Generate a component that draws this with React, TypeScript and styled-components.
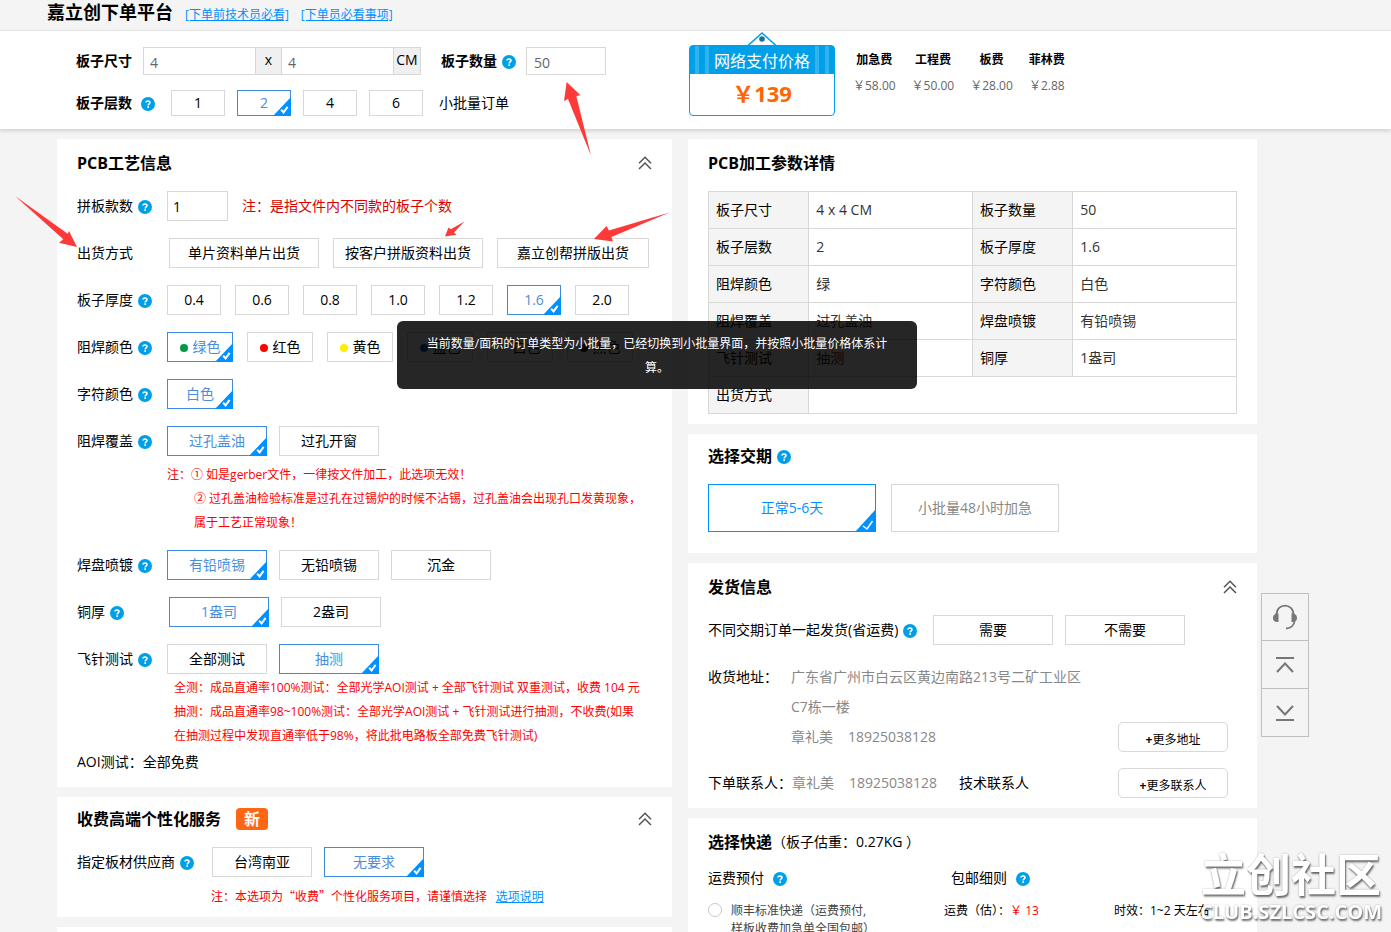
import React from "react";
import styled, { createGlobalStyle, css } from "styled-components";

const GlobalStyle = createGlobalStyle`
  * { box-sizing: border-box; }
  body {
    margin: 0;
    background: #f4f4f4;
    color: #000;
    font-family: "Open Sans", "Noto Sans CJK SC", sans-serif;
    font-size: 14px;
    line-height: 24px;
  }
  button, input { font: inherit; color: inherit; }
  button { cursor: pointer; }
`;

const BLUE = "#0090ff";
const LINE = "#d8d8d8";

const Page = styled.div`
  position: relative;
  height: 100vh;
  overflow-x: hidden;
  overflow-y: auto;
  scrollbar-width: none;
`;

const Header = styled.header`
  display: flex;
  align-items: baseline;
  gap: 12px;
  height: 30px;
  padding: 0 47px;
`;

const SiteTitle = styled.h1`
  margin: 0;
  font-size: 18px;
  line-height: 24px;
`;

const TextLink = styled.a`
  color: ${BLUE};
  font-size: 12px;
  text-decoration: underline;
`;

const OrderBar = styled.section`
  display: flex;
  align-items: flex-start;
  height: 99px;
  padding-left: 76px;
  background: #fff;
  border-top: 1px solid #e4e4e4;
  box-shadow: 0 2px 4px rgba(0, 0, 0, 0.15);
`;

const OrderForm = styled.div`
  flex: 0 0 613px;
  padding-top: 16px;
`;

const FormLine = styled.div`
  display: flex;
  align-items: center;
  height: 28px;
  margin-bottom: 14px;
`;

const BoldLabel = styled.label`
  font-weight: bold;
`;

const SizeGroup = styled.div`
  display: flex;
  width: 278px;
  height: 28px;
  margin: 0 20px 0 11px;
  border: 1px solid ${LINE};
`;

const SizeInput = styled.input`
  flex: 1;
  min-width: 0;
  padding: 3px 6px 0;
  border: 0;
  background: #fff;
  color: #666;
`;

const Unit = styled.span`
  flex: none;
  padding: 0 1px;
  min-width: 27px;
  background: #f0f0f0;
  border: solid ${LINE};
  border-width: 0 1px;
  text-align: center;

  &:last-child { border-right: 0; }
`;

const CountInput = styled.input`
  width: 80px;
  height: 28px;
  margin-left: 10px;
  padding: 3px 7px 0;
  border: 1px solid ${LINE};
  color: #666;
`;

const HelpButton = styled.button`
  flex: none;
  width: 14px;
  height: 14px;
  margin: 2px 0 0 5px;
  padding: 0;
  border: 0;
  background: none;

  svg { display: block; }
`;

const Options = styled.div<{ $gap?: number; $start?: number }>`
  display: flex;
  gap: ${(p) => p.$gap ?? 12}px;
  margin-left: ${(p) => p.$start ?? 0}px;
`;

const OptionButton = styled.button<{ $w: number; $h?: number; $on?: boolean; $soft?: boolean }>`
  position: relative;
  flex: none;
  display: flex;
  align-items: center;
  justify-content: center;
  width: ${(p) => p.$w}px;
  height: ${(p) => p.$h ?? 30}px;
  padding: 0;
  background: #fff;
  border: 1px solid ${LINE};
  ${(p) => p.$soft && css`color: #888;`}
  ${(p) =>
    p.$on &&
    css`
      border-color: ${p.$soft ? BLUE : "#3d8be0"};
      color: ${p.$soft ? BLUE : "#4a8ee0"};
    `}
`;

const Corner = styled.svg`
  position: absolute;
  right: -1px;
  bottom: -1px;
`;

const Dot = styled.i<{ $c: string }>`
  width: 8px;
  height: 8px;
  margin: 2px 5px 0 0;
  border-radius: 50%;
  background: ${(p) => p.$c};
`;

const BatchNote = styled.span`
  margin-left: 16px;
`;

const PriceTag = styled.div`
  position: relative;
  flex: 0 0 146px;
  height: 71px;
  margin-top: 14px;
  border: 1px solid #00a0e9;
  border-radius: 4px;
  text-align: center;
`;

const Hook = styled.svg`
  position: absolute;
  left: 56px;
  top: -15px;
`;

const PriceHead = styled.div`
  height: 28px;
  color: #fff;
  font-size: 16px;
  line-height: 31px;
  background: linear-gradient(
    90deg,
    #00a0e9 5px, #2fb2ee 5px 9px, #00a0e9 9px 15px, #2fb2ee 15px 19px, #00a0e9 19px 125px,
    #2fb2ee 125px 129px, #00a0e9 129px 135px, #2fb2ee 135px 139px, #00a0e9 139px
  );
`;

const PriceValue = styled.strong`
  display: block;
  color: #ff6600;
  font-size: 22px;
  line-height: 38px;
`;

const FeeList = styled.dl`
  display: flex;
  gap: 16px;
  margin: 16px 0 0 18px;
  font-size: 12px;
  line-height: 26px;
  text-align: center;
`;

const FeeName = styled.dt`
  font-weight: bold;
`;

const FeeValue = styled.dd`
  margin: 0;
  color: #666;
  white-space: nowrap;
`;

const Main = styled.main`
  display: grid;
  grid-template-columns: 615fr 569fr;
  align-items: start;
  gap: 16px;
  padding: 10px 134px 10px 57px;
`;

const Column = styled.div`
  display: grid;
  gap: 10px;
  min-width: 0;
`;

const Card = styled.section<{ $tight?: boolean; $bottom?: number }>`
  padding: ${(p) => (p.$tight ? 10 : 12)}px 20px ${(p) => p.$bottom ?? 10}px;
  background: #fff;
`;

const CardHead = styled.div`
  display: flex;
  align-items: center;
  height: 24px;
  margin-bottom: 16px;
`;

const CardTitle = styled.h2`
  margin: 0;
  font-size: 16px;
`;

const FoldButton = styled.button`
  width: 14px;
  height: 14px;
  margin-left: auto;
  padding: 0;
  border: 0;
  background: none;

  svg { display: block; }
`;

const NewBadge = styled.span`
  width: 32px;
  height: 22px;
  margin-left: 15px;
  border-radius: 4px;
  background: #ff6614;
  color: #fff;
  font-size: 16px;
  font-weight: bold;
  line-height: 22px;
  text-align: center;
`;

const Row = styled.div<{ $last?: boolean }>`
  display: flex;
  align-items: center;
  min-height: 30px;
  margin-bottom: ${(p) => (p.$last ? 0 : 17)}px;
`;

const RowLabel = styled.div<{ $w?: number }>`
  display: flex;
  align-items: center;
  flex: 0 0 ${(p) => p.$w ?? 90}px;
`;

const PanelInput = styled.input`
  width: 61px;
  height: 30px;
  padding: 0 5px;
  border: 1px solid ${LINE};
`;

const InlineNote = styled.span`
  margin-left: 14px;
  color: #d90000;
`;

const Notes = styled.div<{ $left: number; $top: number; $bottom: number }>`
  margin: ${(p) => p.$top}px 0 ${(p) => p.$bottom}px ${(p) => p.$left}px;
  color: #f00;
  font-size: 12px;
  white-space: nowrap;
`;

const NoteLine = styled.p<{ $indent?: boolean; $wideQuotes?: boolean }>`
  margin: 0;
  padding-left: ${(p) => (p.$indent ? 27 : 0)}px;
  ${(p) => p.$wideQuotes && css`font-family: "Noto Sans CJK SC", sans-serif;`}

  a { margin-left: 6px; }
`;

const PlainLine = styled.p`
  margin: 0;
  line-height: 28px;
`;

const SpecTable = styled.table`
  width: 100%;
  table-layout: fixed;
  border-collapse: collapse;

  th, td {
    height: 37px;
    padding: 0 7px;
    border: 1px solid ${LINE};
    font-weight: normal;
    text-align: left;
  }
  th { width: 19%; background: #f4f4f4; }
  td { color: #333; }
`;

const Address = styled.address`
  flex: 1;
  color: #888;
  font-style: normal;
  line-height: 30px;
`;

const Person = styled.span`
  color: #888;
  margin-right: 15px;
`;

const AddressRow = styled.div`
  display: flex;
  align-items: flex-end;
  padding-right: 9px;
  line-height: 30px;

  & + & { margin-top: 16px; }
`;

const AddressLabel = styled.span`
  flex: 0 0 83px;
  align-self: flex-start;
  white-space: nowrap;
`;

const MoreButton = styled.button`
  flex: none;
  width: 110px;
  height: 30px;
  margin-left: auto;
  padding: 2px 0 0;
  background: #fff;
  border: 1px solid ${LINE};
  border-radius: 5px;
  font-size: 12px;
`;

const Phone = styled.span`
  margin-right: 22px;
  color: #888;
`;

const ExpressGrid = styled.div`
  display: grid;
  grid-template-columns: 236fr 170fr 123fr;
  font-size: 12px;
  line-height: 18px;
  white-space: nowrap;
`;

const ExpressHead = styled.div`
  display: grid;
  grid-template-columns: 243fr 286fr;
  margin: -4px 0 12px;
`;

const HelpTitle = styled.div`
  display: flex;
  align-items: center;

  button { margin-left: 9px; }
`;

const RadioLabel = styled.label`
  display: flex;
  align-items: flex-start;
  gap: 9px;
  color: #444;
`;

const Radio = styled.input`
  appearance: none;
  flex: none;
  width: 14px;
  height: 14px;
  margin: 1px 0 0;
  border: 1px solid #c8c8c8;
  border-radius: 50%;
  background: #fff;
`;

const Red = styled.span`
  color: #f00;
`;

const SideRail = styled.nav`
  position: fixed;
  right: 82px;
  top: 593px;
  width: 48px;
  border: 1px solid #bfbfbf;
  background: #f4f4f4;
`;

const RailButton = styled.button`
  display: flex;
  align-items: center;
  justify-content: center;
  width: 100%;
  height: 48px;
  padding: 0;
  border: 0;
  background: none;

  & + & { border-top: 1px solid #bfbfbf; }
  &:first-child { height: 46px; }
`;

const Toast = styled.div`
  position: absolute;
  left: 397px;
  top: 321px;
  width: 520px;
  padding: 11px 24px 9px;
  border-radius: 6px;
  background: rgba(0, 0, 0, 0.85);
  color: #fff;
  font-size: 12px;
  text-align: center;
`;

const Arrows = styled.svg`
  position: absolute;
  left: 0;
  top: 0;
  pointer-events: none;
`;

const Watermark = styled.div`
  position: fixed;
  right: 9px;
  bottom: 8px;
  color: #fff;
  font-weight: bold;
  text-align: center;
  text-shadow: 1px 2px 2px rgba(0, 0, 0, 0.55), 0 0 2px rgba(0, 0, 0, 0.3);
  pointer-events: none;
`;

const WatermarkName = styled.div`
  font-size: 45px;
  line-height: 50px;
`;

const WatermarkSite = styled.div`
  font-size: 20px;
  line-height: 24px;
`;

function Help({ about }: { about: string }) {
  return (
    <HelpButton type="button" aria-label={about}>
      <svg width="14" height="14" viewBox="0 0 14 14">
        <circle cx="7" cy="7" r="7" fill="#00a0e9" />
        <path d="M5 5.6C5 3.4 9 3.4 9 5.5C9 6.8 7.2 6.8 7.2 8.4" fill="none" stroke="#fff" strokeWidth="1.6" />
        <rect x="6.3" y="9.3" width="1.7" height="1.6" fill="#fff" />
      </svg>
    </HelpButton>
  );
}

function Fold() {
  return (
    <FoldButton type="button" aria-label="收起">
      <svg width="14" height="14" viewBox="0 0 14 14" fill="none" stroke="#555" strokeWidth="1.5">
        <path d="M1 7.2L7 1.2L13 7.2M1 13L7 7L13 13" />
      </svg>
    </FoldButton>
  );
}

type OptionProps = {
  text: string;
  w: number;
  h?: number;
  on?: boolean;
  dot?: string;
  soft?: boolean;
};

function Option({ text, w, h, on, dot, soft }: OptionProps) {
  return (
    <OptionButton type="button" $w={w} $h={h} $on={on} $soft={soft} aria-pressed={!!on}>
      {dot && <Dot $c={dot} />}
      {text}
      {on && !soft && (
        <Corner width="18" height="19" viewBox="0 0 18 19">
          <path d="M18 0V19H0Z" fill={BLUE} />
          <path d="M8.2 12.8L10.6 15.4L14.6 9.8" fill="none" stroke="#fff" strokeWidth="2" />
        </Corner>
      )}
      {on && soft && (
        <Corner width="21" height="23" viewBox="0 0 21 23">
          <path d="M21 0V23H0Z" fill={BLUE} />
          <path d="M8 17L12 20L17.5 12" fill="none" stroke="#fff" strokeWidth="1.5" />
        </Corner>
      )}
    </OptionButton>
  );
}

const fees = [
  ["加急费", "￥58.00"],
  ["工程费", "￥50.00"],
  ["板费", "￥28.00"],
  ["菲林费", "￥2.88"],
];

const specs = [
  ["板子尺寸", "4 x 4 CM", "板子数量", "50"],
  ["板子层数", "2", "板子厚度", "1.6"],
  ["阻焊颜色", "绿", "字符颜色", "白色"],
  ["阻焊覆盖", "过孔盖油", "焊盘喷镀", "有铅喷锡"],
  ["飞针测试", "抽测", "铜厚", "1盎司"],
];

const maskColours = [
  ["绿色", "#009944"],
  ["红色", "#ff0000"],
  ["黄色", "#ffee00"],
  ["蓝色", "#0068b7"],
  ["白色", "#eeeeee"],
  ["黑色", "#000000"],
];

export default function App() {
  return (
    <Page>
      <GlobalStyle />
      <Header>
        <SiteTitle>嘉立创下单平台</SiteTitle>
        <TextLink href="#tech">[下单前技术员必看]</TextLink>
        <TextLink href="#order">[下单员必看事项]</TextLink>
      </Header>

      <OrderBar>
        <OrderForm>
          <FormLine>
            <BoldLabel htmlFor="len">板子尺寸</BoldLabel>
            <SizeGroup>
              <SizeInput id="len" defaultValue="4" />
              <Unit>x</Unit>
              <SizeInput aria-label="板子宽度" defaultValue="4" />
              <Unit>CM</Unit>
            </SizeGroup>
            <BoldLabel htmlFor="count">板子数量</BoldLabel>
            <Help about="板子数量说明" />
            <CountInput id="count" defaultValue="50" />
          </FormLine>
          <FormLine>
            <BoldLabel as="span">板子层数</BoldLabel>
            <HelpTitle>
              <Help about="板子层数说明" />
            </HelpTitle>
            <Options $start={16}>
              {["1", "2", "4", "6"].map((n) => (
                <Option key={n} text={n} w={54} h={26} on={n === "2"} />
              ))}
            </Options>
            <BatchNote>小批量订单</BatchNote>
          </FormLine>
        </OrderForm>
        <PriceTag>
          <Hook width="32" height="15" viewBox="0 0 32 15">
            <path d="M2 14.5L16 2L30 14.5" fill="none" stroke="#00a0e9" strokeWidth="1.6" />
            <circle cx="16" cy="8" r="2.8" fill="#1b6f9c" />
          </Hook>
          <PriceHead>网络支付价格</PriceHead>
          <PriceValue>￥139</PriceValue>
        </PriceTag>
        <FeeList>
          {fees.map(([name, value]) => (
            <div key={name}>
              <FeeName>{name}</FeeName>
              <FeeValue>{value}</FeeValue>
            </div>
          ))}
        </FeeList>
      </OrderBar>

      <Main>
        <Column>
          <Card $bottom={11}>
            <CardHead>
              <CardTitle>PCB工艺信息</CardTitle>
              <Fold />
            </CardHead>
            <Row>
              <RowLabel>
                <label htmlFor="kinds">拼板款数</label>
                <Help about="拼板款数说明" />
              </RowLabel>
              <PanelInput id="kinds" defaultValue="1" />
              <InlineNote>注：是指文件内不同款的板子个数</InlineNote>
            </Row>
            <Row>
              <RowLabel>出货方式</RowLabel>
              <Options $gap={14} $start={2}>
                <Option text="单片资料单片出货" w={150} />
                <Option text="按客户拼版资料出货" w={150} />
                <Option text="嘉立创帮拼版出货" w={152} />
              </Options>
            </Row>
            <Row>
              <RowLabel>
                板子厚度
                <Help about="板子厚度说明" />
              </RowLabel>
              <Options $gap={14}>
                {["0.4", "0.6", "0.8", "1.0", "1.2", "1.6", "2.0"].map((t) => (
                  <Option key={t} text={t} w={54} on={t === "1.6"} />
                ))}
              </Options>
            </Row>
            <Row>
              <RowLabel>
                阻焊颜色
                <Help about="阻焊颜色说明" />
              </RowLabel>
              <Options $gap={14}>
                {maskColours.map(([name, c]) => (
                  <Option key={name} text={name} dot={c} w={66} on={name === "绿色"} />
                ))}
              </Options>
            </Row>
            <Row>
              <RowLabel>
                字符颜色
                <Help about="字符颜色说明" />
              </RowLabel>
              <Options>
                <Option text="白色" w={66} on />
              </Options>
            </Row>
            <Row $last>
              <RowLabel>
                阻焊覆盖
                <Help about="阻焊覆盖说明" />
              </RowLabel>
              <Options>
                <Option text="过孔盖油" w={100} on />
                <Option text="过孔开窗" w={100} />
              </Options>
            </Row>
            <Notes $left={90} $top={7} $bottom={15}>
              <NoteLine>注：① 如是gerber文件，一律按文件加工，此选项无效！</NoteLine>
              <NoteLine $indent>② 过孔盖油检验标准是过孔在过锡炉的时候不沾锡，过孔盖油会出现孔口发黄现象，</NoteLine>
              <NoteLine $indent>属于工艺正常现象！</NoteLine>
            </Notes>
            <Row>
              <RowLabel>
                焊盘喷镀
                <Help about="焊盘喷镀说明" />
              </RowLabel>
              <Options>
                <Option text="有铅喷锡" w={100} on />
                <Option text="无铅喷锡" w={100} />
                <Option text="沉金" w={100} />
              </Options>
            </Row>
            <Row>
              <RowLabel>
                铜厚
                <Help about="铜厚说明" />
              </RowLabel>
              <Options $start={2}>
                <Option text="1盎司" w={100} on />
                <Option text="2盎司" w={100} />
              </Options>
            </Row>
            <Row $last>
              <RowLabel>
                飞针测试
                <Help about="飞针测试说明" />
              </RowLabel>
              <Options>
                <Option text="全部测试" w={100} />
                <Option text="抽测" w={100} on />
              </Options>
            </Row>
            <Notes $left={97} $top={2} $bottom={0}>
              <NoteLine>全测：成品直通率100%测试：全部光学AOI测试 + 全部飞针测试 双重测试，收费 104 元</NoteLine>
              <NoteLine>抽测：成品直通率98~100%测试：全部光学AOI测试 + 飞针测试进行抽测，不收费(如果</NoteLine>
              <NoteLine>在抽测过程中发现直通率低于98%，将此批电路板全部免费飞针测试)</NoteLine>
            </Notes>
            <PlainLine>AOI测试：全部免费</PlainLine>
          </Card>

          <Card $tight $bottom={9}>
            <CardHead>
              <CardTitle>收费高端个性化服务</CardTitle>
              <NewBadge>新</NewBadge>
              <Fold />
            </CardHead>
            <Row $last>
              <RowLabel $w={135}>
                指定板材供应商
                <Help about="板材供应商说明" />
              </RowLabel>
              <Options>
                <Option text="台湾南亚" w={100} />
                <Option text="无要求" w={100} on />
              </Options>
            </Row>
            <Notes $left={134} $top={7} $bottom={0}>
              <NoteLine $wideQuotes>
                注：本选项为“收费”个性化服务项目，请谨慎选择 <TextLink href="#supplier">选项说明</TextLink>
              </NoteLine>
            </Notes>
          </Card>

          <Card>
            <CardHead />
          </Card>
        </Column>

        <Column>
          <Card>
            <CardHead>
              <CardTitle>PCB加工参数详情</CardTitle>
            </CardHead>
            <SpecTable>
              <tbody>
                {specs.map(([a, b, c, d]) => (
                  <tr key={a}>
                    <th scope="row">{a}</th>
                    <td>{b}</td>
                    <th scope="row">{c}</th>
                    <td>{d}</td>
                  </tr>
                ))}
                <tr>
                  <th scope="row">出货方式</th>
                  <td colSpan={3} />
                </tr>
              </tbody>
            </SpecTable>
          </Card>

          <Card $tight $bottom={21}>
            <CardHead>
              <CardTitle>选择交期</CardTitle>
              <Help about="交期说明" />
            </CardHead>
            <Options $gap={15}>
              <Option text="正常5-6天" w={168} h={48} on soft />
              <Option text="小批量48小时加急" w={168} h={48} soft />
            </Options>
          </Card>

          <Card>
            <CardHead>
              <CardTitle>发货信息</CardTitle>
              <Fold />
            </CardHead>
            <Row>
              <RowLabel $w={225}>
                不同交期订单一起发货(省运费)
                <Help about="一起发货说明" />
              </RowLabel>
              <Options>
                <Option text="需要" w={120} />
                <Option text="不需要" w={120} />
              </Options>
            </Row>
            <AddressRow>
              <AddressLabel>收货地址：</AddressLabel>
              <Address>
                广东省广州市白云区黄边南路213号二矿工业区
                <br />
                C7栋一楼
                <br />
                <Person>章礼美</Person>18925038128
              </Address>
              <MoreButton type="button">
                <b>+</b>更多地址
              </MoreButton>
            </AddressRow>
            <AddressRow>
              <AddressLabel>下单联系人：</AddressLabel>
              <Person>章礼美</Person>
              <Phone>18925038128</Phone>
              <span>技术联系人</span>
              <MoreButton type="button">
                <b>+</b>更多联系人
              </MoreButton>
            </AddressRow>
          </Card>

          <Card>
            <CardHead>
              <CardTitle>选择快递</CardTitle>
              <span>（板子估重：0.27KG ）</span>
            </CardHead>
            <ExpressHead>
              <HelpTitle>
                运费预付
                <Help about="运费预付说明" />
              </HelpTitle>
              <HelpTitle>
                包邮细则
                <Help about="包邮细则说明" />
              </HelpTitle>
            </ExpressHead>
            <ExpressGrid>
              <RadioLabel>
                <Radio type="radio" name="express" />
                <span>
                  顺丰标准快递（运费预付,
                  <br />
                  样板收费加急单全国包邮）
                </span>
              </RadioLabel>
              <span>
                运费（估）：<Red>￥ 13</Red>
              </span>
              <span>时效：1~2 天左右</span>
            </ExpressGrid>
          </Card>
        </Column>
      </Main>

      <SideRail>
        <RailButton type="button" aria-label="在线客服">
          <svg width="26" height="26" viewBox="0 0 26 26" fill="none" stroke="#777">
            <path d="M4.5 11C4.5 -1.5 21.5 -1.5 21.5 11" strokeWidth="1.8" />
            <path d="M22.5 17C22 21.5 19 24 14 24.6" strokeWidth="1.8" />
            <path d="M6.5 9.5V18C2.5 18 1 16.5 1 14C1 11.5 2.5 9.5 6.5 9.5ZM19.5 9.5V18C23.5 18 25 16.5 25 14C25 11.5 23.5 9.5 19.5 9.5Z" fill="#777" stroke="none" />
          </svg>
        </RailButton>
        <RailButton type="button" aria-label="回到顶部">
          <svg width="20" height="18" viewBox="0 0 20 18" fill="none" stroke="#777" strokeWidth="2">
            <path d="M1 2H19M2 16L10 7.5L18 16" />
          </svg>
        </RailButton>
        <RailButton type="button" aria-label="到底部">
          <svg width="20" height="18" viewBox="0 0 20 18" fill="none" stroke="#777" strokeWidth="2">
            <path d="M1 16H19M2 2L10 10.5L18 2" />
          </svg>
        </RailButton>
      </SideRail>

      <Toast role="status">
        当前数量/面积的订单类型为小批量，已经切换到小批量界面，并按照小批量价格体系计算。
      </Toast>

      <Arrows width="680" height="260" viewBox="0 0 680 260" fill="#fd3a38" aria-hidden="true">
        <path d="M566.7 82L564 101L568 99L591 155.5L576.3 96L580.5 95.3Z" />
        <path d="M15 196L67.7 233.7L69 231L77 247L59 242.7L63.3 239.3Z" />
        <path d="M445 236.5L448.5 227.5L450.8 229.2L464.5 221.5L454 232.6L456.5 234.8Z" />
        <path d="M594 239L606.6 226L608.9 230.5L669.5 212.5L611.4 237L613 241.5Z" />
      </Arrows>

      <Watermark>
        <WatermarkName>立创社区</WatermarkName>
        <WatermarkSite>CLUB.SZLCSC.COM</WatermarkSite>
      </Watermark>
    </Page>
  );
}
